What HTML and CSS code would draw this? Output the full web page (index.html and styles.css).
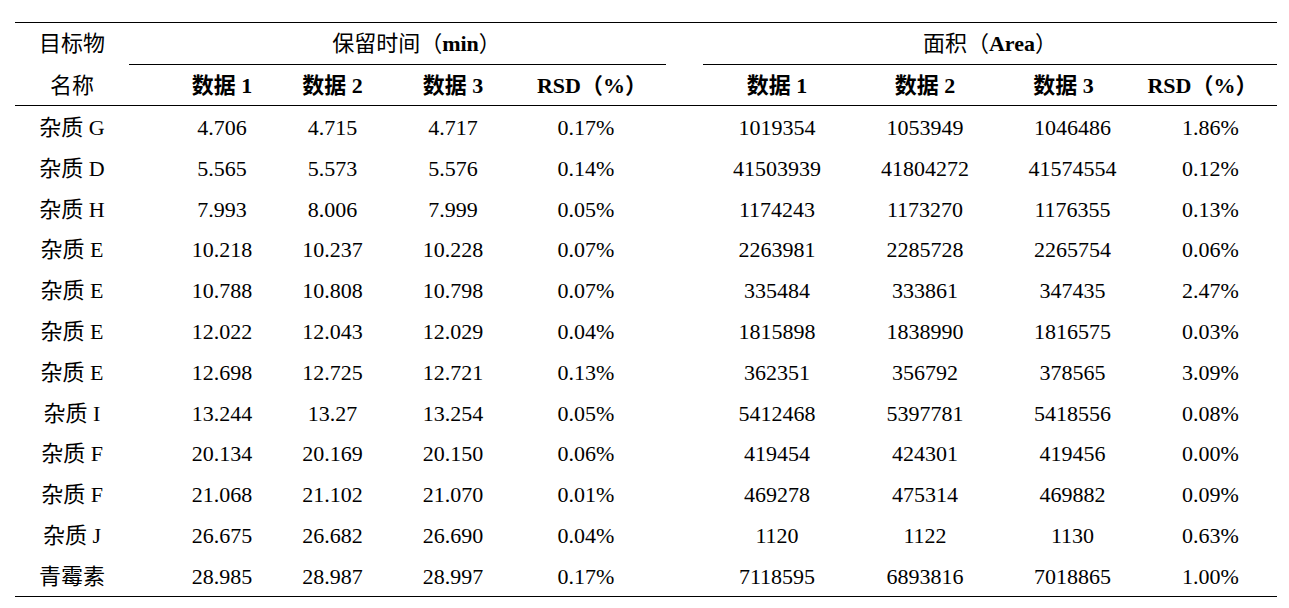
FILE: index.html
```html
<!DOCTYPE html>
<html lang="zh-CN">
<head>
<meta charset="utf-8">
<title>保留时间与面积</title>
<link rel="stylesheet" href="styles.css">
</head>
<body>
<table class="data">
  <colgroup>
    <col class="c-name"><col class="c-pad"><col class="c-l1"><col class="c-l2"><col class="c-l3"><col class="c-l4">
    <col class="c-gap"><col class="c-r1"><col class="c-r2"><col class="c-r3"><col class="c-r4">
  </colgroup>
  <thead>
    <tr class="h1">
      <th class="name">目标物</th>
      <th colspan="5" class="grp grp-l">保留时间（<b>min</b>）</th>
      <th class="gap"></th>
      <th colspan="4" class="grp">面积（<b>Area</b>）</th>
    </tr>
    <tr class="h2">
      <th class="name">名称</th>
      <th></th>
      <th>数据 1</th><th>数据 2</th><th>数据 3</th><th>RSD（%）</th>
      <th class="gap"></th>
      <th>数据 1</th><th>数据 2</th><th>数据 3</th><th>RSD（%）</th>
    </tr>
  </thead>
  <tbody>
    <tr><td class="name">杂质 G</td><td></td><td>4.706</td><td>4.715</td><td>4.717</td><td class="lr">0.17%</td><td></td><td>1019354</td><td>1053949</td><td class="r3">1046486</td><td class="r4">1.86%</td></tr>
    <tr><td class="name">杂质 D</td><td></td><td>5.565</td><td>5.573</td><td>5.576</td><td class="lr">0.14%</td><td></td><td>41503939</td><td>41804272</td><td class="r3">41574554</td><td class="r4">0.12%</td></tr>
    <tr><td class="name">杂质 H</td><td></td><td>7.993</td><td>8.006</td><td>7.999</td><td class="lr">0.05%</td><td></td><td>1174243</td><td>1173270</td><td class="r3">1176355</td><td class="r4">0.13%</td></tr>
    <tr><td class="name">杂质 E</td><td></td><td>10.218</td><td>10.237</td><td>10.228</td><td class="lr">0.07%</td><td></td><td>2263981</td><td>2285728</td><td class="r3">2265754</td><td class="r4">0.06%</td></tr>
    <tr><td class="name">杂质 E</td><td></td><td>10.788</td><td>10.808</td><td>10.798</td><td class="lr">0.07%</td><td></td><td>335484</td><td>333861</td><td class="r3">347435</td><td class="r4">2.47%</td></tr>
    <tr><td class="name">杂质 E</td><td></td><td>12.022</td><td>12.043</td><td>12.029</td><td class="lr">0.04%</td><td></td><td>1815898</td><td>1838990</td><td class="r3">1816575</td><td class="r4">0.03%</td></tr>
    <tr><td class="name">杂质 E</td><td></td><td>12.698</td><td>12.725</td><td>12.721</td><td class="lr">0.13%</td><td></td><td>362351</td><td>356792</td><td class="r3">378565</td><td class="r4">3.09%</td></tr>
    <tr><td class="name">杂质 I</td><td></td><td>13.244</td><td>13.27</td><td>13.254</td><td class="lr">0.05%</td><td></td><td>5412468</td><td>5397781</td><td class="r3">5418556</td><td class="r4">0.08%</td></tr>
    <tr><td class="name">杂质 F</td><td></td><td>20.134</td><td>20.169</td><td>20.150</td><td class="lr">0.06%</td><td></td><td>419454</td><td>424301</td><td class="r3">419456</td><td class="r4">0.00%</td></tr>
    <tr><td class="name">杂质 F</td><td></td><td>21.068</td><td>21.102</td><td>21.070</td><td class="lr">0.01%</td><td></td><td>469278</td><td>475314</td><td class="r3">469882</td><td class="r4">0.09%</td></tr>
    <tr><td class="name">杂质 J</td><td></td><td>26.675</td><td>26.682</td><td>26.690</td><td class="lr">0.04%</td><td></td><td>1120</td><td>1122</td><td class="r3">1130</td><td class="r4">0.63%</td></tr>
    <tr class="last"><td class="name">青霉素</td><td></td><td>28.985</td><td>28.987</td><td>28.997</td><td class="lr">0.17%</td><td></td><td>7118595</td><td>6893816</td><td class="r3">7018865</td><td class="r4">1.00%</td></tr>
  </tbody>
</table>
</body>
</html>
```
FILE: styles.css
```css
html, body {
  margin: 0;
  padding: 0;
  background: #fff;
}

body {
  padding: 22px 0 0 15px;
  font-family: "Liberation Serif", "Noto Sans CJK SC", serif;
  color: #000;
}

.data {
  border-collapse: collapse;
  table-layout: fixed;
  width: 1262px;
  font-size: 22px;
  border-top: 1px solid #000;
}

.c-name { width: 114px; }
.c-pad { width: 38px; }
.c-l1 { width: 110px; }
.c-l2 { width: 111px; }
.c-l3 { width: 130px; }
.c-l4 { width: 148px; }
.c-gap { width: 37px; }
.c-r1 { width: 148px; }
.c-r2 { width: 148px; }
.c-r3 { width: 129px; }
.c-r4 { width: 149px; }

th, td {
  padding: 0;
  text-align: center;
  vertical-align: middle;
  white-space: nowrap;
  line-height: 1;
}

th {
  font-weight: bold;
  font-family: "Liberation Serif", "Noto Sans CJK SC", serif;
}

thead .h1 th { height: 40px; padding-top: 1px; }
thead .h2 th { height: 38px; padding-top: 2px; border-bottom: 1px solid #000; }

th.name,
th.grp {
  font-weight: normal;
}

th.grp b { font-weight: bold; }

th.grp { border-bottom: 1px solid #000; }
th.grp-l { padding-left: 38px; }

th.gap { border-bottom: none; }
thead .h2 th.gap { border-bottom: 1px solid #000; }

tbody td { height: 37.5px; padding-top: 3.3px; }
tbody tr.last td { height: 38.3px; }

td.lr { padding-right: 12px; }
td.r3 { padding-left: 18px; }
td.r4 { padding-left: 16px; }

tbody tr.last td { border-bottom: 1px solid #000; }
```
